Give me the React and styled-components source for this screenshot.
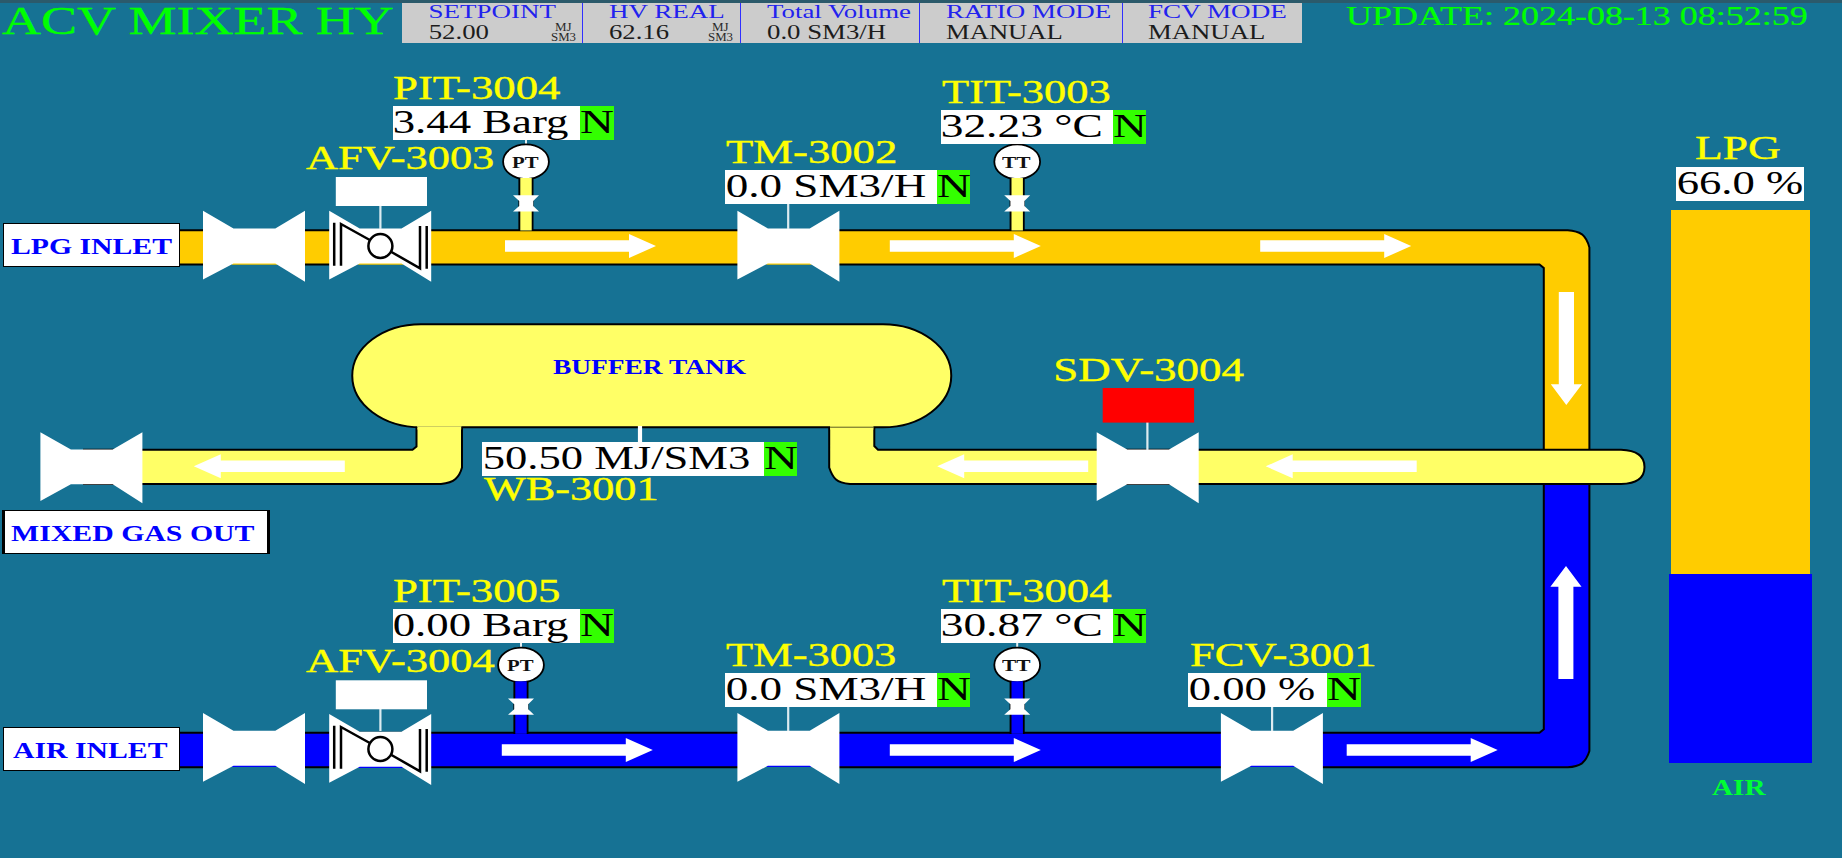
import React from "react";
import styled, { createGlobalStyle } from "styled-components";

const BG = "#167294";
const ORANGE = "#ffcc00";
const BLUE = "#0000ff";
const GAS = "#ffff66";
const YELLOW = "#ffff00";
const HEADER = 44;
const FONT = '"Liberation Serif", "Times New Roman", serif';

const GlobalStyle = createGlobalStyle`
  html, body { margin: 0; padding: 0; background: ${BG}; overflow: hidden; }
  * { box-sizing: border-box; }
`;

const Page = styled.div`
  width: 1842px;
  height: 858px;
  display: flex;
  flex-direction: column;
  background: ${BG};
  font-family: ${FONT};
  overflow: hidden;
`;

/* ---------- stretched text ---------- */

const Slot = styled.span`
  display: block;
  flex: none;
  width: ${(p) => p.$w}px;
  height: ${(p) => p.$line}px;
  line-height: ${(p) => p.$line}px;
  font-size: ${(p) => p.$size}px;
  font-weight: ${(p) => (p.$bold ? 700 : 400)};
  color: ${(p) => p.$color || "inherit"};
  -webkit-text-stroke: ${(p) => p.$heavy || 0}px currentColor;
  white-space: pre;
`;

const Glyphs = styled.span`
  display: inline-block;
  transform-origin: 0 50%;
`;

let ctx;
function stretch(text, size, bold, w) {
  ctx = ctx || document.createElement("canvas").getContext("2d");
  ctx.font = `${bold ? "bold " : ""}${size}px ${FONT}`;
  const m = ctx.measureText(text);
  const k = w / (m.actualBoundingBoxLeft + m.actualBoundingBoxRight);
  return `translateX(${m.actualBoundingBoxLeft * k}px) scaleX(${k})`;
}

function Fit({ children, w, size = 34, line = size, bold, heavy, color }) {
  return (
    <Slot $w={w} $size={size} $line={line} $bold={bold} $heavy={heavy} $color={color}>
      <Glyphs style={{ transform: stretch(children, size, bold, w) }}>{children}</Glyphs>
    </Slot>
  );
}

/* ---------- header ---------- */

const Header = styled.header`
  height: ${HEADER}px;
  flex: none;
  display: flex;
  align-items: flex-start;
  border-top: 3px solid #2b5a6b;
`;

const TitleBox = styled.h1`
  width: 401.5px;
  margin: 0;
  padding: 0 0 0 1.5px;
`;

const StatusPanel = styled.div`
  display: flex;
  height: 40px;
  background: #cccccc;
`;

const Cell = styled.div`
  width: ${(p) => p.$w}px;
  padding: 0 6.5px 0 ${(p) => p.$pad}px;
  border-right: ${(p) => (p.$last ? "0" : "1px solid #2f2fff")};
`;

const ValueRow = styled.div`
  display: flex;
  justify-content: space-between;
`;

const Unit = styled.div`
  display: flex;
  flex-direction: column;
  align-items: center;
  padding-top: 2px;
`;

const Clock = styled.div`
  padding: 0 0 0 44.5px;
`;

const STATUS = [
  { w: 181.5, pad: 28, label: "SETPOINT", lw: 126, value: "52.00", vw: 59, unit: true },
  { w: 157.5, pad: 25.7, label: "HV REAL", lw: 115, value: "62.16", vw: 60, unit: true },
  { w: 179.5, pad: 26, label: "Total Volume", lw: 143.5, value: "0.0 SM3/H", vw: 118.5 },
  { w: 202.5, pad: 26.4, label: "RATIO MODE", lw: 164, value: "MANUAL", vw: 116.5 },
  { w: 179, pad: 25.5, label: "FCV MODE", lw: 138, value: "MANUAL", vw: 117, last: true },
];

function TopBar() {
  return (
    <Header>
      <TitleBox>
        <Fit w={392} size={41} line={35} heavy={0.3} color="#00ff00">ACV MIXER HY</Fit>
      </TitleBox>
      <StatusPanel>
        {STATUS.map((s) => (
          <Cell key={s.label} $w={s.w} $pad={s.pad} $last={s.last}>
            <Fit w={s.lw} size={19.5} line={17} color="#2222ee">{s.label}</Fit>
            <ValueRow>
              <Fit w={s.vw} size={20} line={25} color="#1c1c1c">{s.value}</Fit>
              {s.unit && (
                <Unit>
                  <Fit w={17} size={12} line={10} color="#2a2a2a">MJ</Fit>
                  <Fit w={25} size={12} line={10} color="#2a2a2a">SM3</Fit>
                </Unit>
              )}
            </ValueRow>
          </Cell>
        ))}
      </StatusPanel>
      <Clock>
        <Fit w={460.5} size={28} line={25} heavy={0.2} color="#00ff00">UPDATE: 2024-08-13 08:52:59</Fit>
      </Clock>
    </Header>
  );
}

/* ---------- diagram ---------- */

const Body = styled.main`
  flex: 1;
  display: flex;
`;

const Diagram = styled.section`
  position: relative;
  width: 1660px;
  flex: none;
`;

const Piping = styled.svg`
  display: block;
`;

const Placed = styled.div`
  position: absolute;
  left: ${(p) => p.$x}px;
  top: ${(p) => p.$y - HEADER}px;
`;

const Readout = styled.div`
  display: flex;
  height: 34px;
  width: ${(p) => p.$w}px;
  background: #ffffff;
  color: #000000;
  padding-left: ${(p) => p.$pad || 1.5}px;
  justify-content: space-between;
`;

const State = styled.div`
  width: 33.2px;
  height: 34px;
  background: #33ff00;
`;

const Instrument = styled(Placed)`
  display: flex;
  flex-direction: ${(p) => (p.$below ? "column-reverse" : "column")};
`;

const TagName = styled.div`
  padding: 0 0 ${(p) => (p.$below ? 0 : 1)}px ${(p) => p.$indent || 0}px;
`;

const Terminal = styled(Placed)`
  display: flex;
  justify-content: center;
  align-items: center;
  width: ${(p) => p.$w}px;
  height: 44px;
  padding-right: ${(p) => p.$shift || 0}px;
  padding-top: 1px;
  background: #ffffff;
  border: solid #000000;
  border-width: 1.5px ${(p) => p.$side || 1.5}px;
`;

function Label({ x, y, w, size = 34, line = size, bold, color = YELLOW, children }) {
  return (
    <Placed $x={x} $y={y}>
      <Fit w={w} size={size} line={line} bold={bold} heavy={bold ? 0 : 0.4} color={color}>{children}</Fit>
    </Placed>
  );
}

/* An instrument: its tag name over (or under) the live value and alarm state. */
function Tag({ x, y, w, name, nw, indent, value, vw, below }) {
  return (
    <Instrument $x={x} $y={below ? y : y - 36} $below={below}>
      <TagName $indent={indent} $below={below}>
        <Fit w={nw} line={below ? 25 : 35} heavy={0.4} color={YELLOW}>{name}</Fit>
      </TagName>
      <Readout $w={w}>
        <Fit w={vw} line={31}>{value}</Fit>
        <State>
          <Fit w={33} line={31}>N</Fit>
        </State>
      </Readout>
    </Instrument>
  );
}

function Valve({ x, y, under }) {
  return (
    <g transform={`translate(${x} ${y})`}>
      {under && <rect x="25" y="52" width="52" height="4.5" fill={BG} />}
      {under && <rect x="29" y="51" width="45" height="3" fill={under} />}
      <polygon
        points={
          under
            ? "0,0 30.5,17.7 72.3,17.7 102,0 102,71 72.3,52.8 30.5,52.8 0,68.7"
            : "0,0 30.5,17.2 72.3,17.2 102,0 102,71 72.3,52 30.5,52 0,68.7"
        }
        fill="#fff"
      />
    </g>
  );
}

function Butterfly({ y }) {
  return (
    <g transform={`translate(0 ${y})`} fill="none" stroke="#000" strokeWidth="2.5">
      <path d="M334.2 222.7V265.7M341 265.7V224L369.8 240M420 226V268.3L390.6 251.5M426.7 226V268.7" />
      <ellipse cx="380.4" cy="246" rx="12" ry="12" />
    </g>
  );
}

function Arrow({ x, y, len = 151, angle = 0 }) {
  return (
    <polygon
      transform={`translate(${x} ${y}) rotate(${angle})`}
      points={`0,-5.7 ${len - 27},-5.7 ${len - 27},-12 ${len},0 ${len - 27},12 ${len - 27},5.7 0,5.7`}
      fill="#fff"
    />
  );
}

function Transmitter({ x, y, fill }) {
  return (
    <g transform={`translate(${x} ${y})`}>
      <rect x="-1" y="-23" width="2" height="6" fill="#e4f0f4" />
      <ellipse cx="0" cy="0" rx="22.9" ry="17.4" fill="#fff" stroke="#000" strokeWidth="1.8" />
      <rect x="-7.6" y="17" width="15.1" height="52" fill="#000" />
      <rect x="-5.7" y="16.3" width="11.4" height="52.5" fill={fill} />
      <polygon points="-13,33.6 13,33.6 7.2,39.3 7.2,44.3 13,49.8 -13,49.8 -6.8,44.3 -6.8,39.3" fill="#fff" />
    </g>
  );
}

function Pipes() {
  const line = { stroke: "#000", strokeWidth: 2 };
  const stem = { stroke: "#dcebf0", strokeWidth: 2.2 };
  return (
    <Piping width="1660" height="814" viewBox="0 44 1660 814">
      {/* LPG line */}
      <path
        d="M178 230.3H1567.7Q1577 231 1582 234.3Q1587 238.5 1589.4 247.5V452H1543.8V268L1539.5 264.4H178Z"
        fill={ORANGE} {...line}
      />
      {/* air line */}
      <path
        d="M178 732.8H1539.5L1543.8 729.3V482H1589.4V751Q1587 759 1582 763.3Q1577 766.6 1567.7 767.3H178Z"
        fill={BLUE} {...line}
      />
      {/* mixed gas line */}
      <path
        d="M874.3 427V446L878 449.8H1621Q1644.5 450.5 1644.5 467Q1644.5 483.5 1621 484H850Q840 483 836 479.5Q832 476 829.2 467.5V427"
        fill={GAS} {...line}
      />
      <path
        d="M416.5 427V446.5L412.5 449.8H84V484H441Q451 483 455.5 479Q460 475 462 467.5V427"
        fill={GAS} {...line}
      />
      {/* buffer tank */}
      <path
        d="M421 324.2H883A68.3 51.55 0 0 1 883 427.3H421A68.8 51.55 0 0 1 421 324.2Z"
        fill={GAS} {...line}
      />
      <rect x="417.4" y="425.5" width="43.8" height="4" fill={GAS} />
      <rect x="417.4" y="426" width="43.8" height="1" fill="#cfcf60" />
      <rect x="830.1" y="425.5" width="43.3" height="4" fill={GAS} />
      <rect x="830.1" y="426.7" width="43.3" height="1" fill="#5c5c22" />

      <Transmitter x={526} y={161.7} fill={GAS} />
      <Transmitter x={1017.2} y={161.7} fill={GAS} />
      <Transmitter x={521} y={665} fill={BLUE} />
      <Transmitter x={1017.2} y={665} fill={BLUE} />

      <Valve x={203} y={210.7} under={ORANGE} />
      <Valve x={329.2} y={210.7} under={ORANGE} />
      <Valve x={737.4} y={210.7} under={ORANGE} />
      <Valve x={203} y={713} under={BLUE} />
      <Valve x={329.2} y={714} under={BLUE} />
      <Valve x={737.4} y={713} under={BLUE} />
      <Valve x={1220.9} y={713} under={BLUE} />
      <Valve x={40.4} y={432.3} />
      <Valve x={1096.7} y={432.3} />

      <path d="M380.4 206V229M380.4 709V731M788.2 204V229M788.2 707V731M1272.1 707V731M1147.4 422V450" {...stem} />
      <path d="M640 426V443" stroke="#fff" strokeWidth="4.2" />
      <rect x="335.8" y="177" width="91.2" height="29" fill="#fff" />
      <rect x="335.8" y="680.3" width="91.2" height="29" fill="#fff" />
      <rect x="1102.7" y="388" width="91.4" height="34.6" fill="#f00" />
      <Butterfly y={0} />
      <Butterfly y={503} />

      <Arrow x={505} y={246} />
      <Arrow x={889.8} y={246} />
      <Arrow x={1260.2} y={246} />
      <Arrow x={501.8} y={750} />
      <Arrow x={889.8} y={750} />
      <Arrow x={1346.7} y={750} />
      <Arrow x={344.8} y={466.3} angle={180} />
      <Arrow x={1088.2} y={466.3} angle={180} />
      <Arrow x={1416.7} y={466.3} angle={180} />
      <polygon points="1558.8,292 1574,292 1574,384.3 1582,384.3 1566.3,405 1550.8,384.3 1558.8,384.3" fill="#fff" />
      <polygon points="1558.4,679 1573.4,679 1573.4,586.7 1581.5,586.7 1566,566 1550.4,586.7 1558.4,586.7" fill="#fff" />
    </Piping>
  );
}

const TAGS = [
  { x: 392.5, y: 106, w: 221, name: "PIT-3004", nw: 167.5, indent: 0.7, value: "3.44 Barg", vw: 174.5 },
  { x: 725.2, y: 170, w: 245, name: "TM-3002", nw: 170, indent: 1.2, value: "0.0 SM3/H", vw: 198.5 },
  { x: 940.8, y: 110, w: 205.7, name: "TIT-3003", nw: 167.5, indent: 1.6, value: "32.23 °C", vw: 158.5 },
  { x: 482.3, y: 442, w: 314.7, name: "WB-3001", nw: 172, indent: 1.8, value: "50.50 MJ/SM3", vw: 265, below: true },
  { x: 392.5, y: 609, w: 221, name: "PIT-3005", nw: 166, indent: 0.7, value: "0.00 Barg", vw: 174.5 },
  { x: 725.2, y: 673, w: 245, name: "TM-3003", nw: 169, indent: 1.2, value: "0.0 SM3/H", vw: 198.5 },
  { x: 940.8, y: 609, w: 205.7, name: "TIT-3004", nw: 169.5, indent: 1.6, value: "30.87 °C", vw: 158.5 },
  { x: 1188, y: 673, w: 172.5, name: "FCV-3001", nw: 184, indent: 1.5, value: "0.00 %", vw: 124.7 },
];

const BADGES = [
  { x: 512, y: 154, w: 27.3, text: "PT" },
  { x: 1002.2, y: 154, w: 29.3, text: "TT" },
  { x: 507, y: 657, w: 27.3, text: "PT" },
  { x: 1002.2, y: 657, w: 29.3, text: "TT" },
];

function Process() {
  return (
    <Diagram>
      <Pipes />

      <Terminal $x={3.3} $y={223.3} $w={177}>
        <Fit w={161} size={24} bold color={BLUE}>LPG INLET</Fit>
      </Terminal>
      <Terminal $x={2.7} $y={727.3} $w={177} $shift={1}>
        <Fit w={154.5} size={24} bold color={BLUE}>AIR INLET</Fit>
      </Terminal>
      <Terminal $x={2} $y={510} $w={267.7} $side={3} $shift={7}>
        <Fit w={243.5} size={24} bold color={BLUE}>MIXED GAS OUT</Fit>
      </Terminal>

      <Label x={553.4} y={355.7} w={193.5} size={22} bold color={BLUE}>BUFFER TANK</Label>
      <Label x={306} y={140} w={187} line={35}>AFV-3003</Label>
      <Label x={306} y={643} w={188.7} line={35}>AFV-3004</Label>
      <Label x={1055.5} y={352} w={188} line={35}>SDV-3004</Label>

      {TAGS.map((t) => (
        <Tag key={t.name} {...t} />
      ))}
      {BADGES.map((b) => (
        <Label key={`${b.x}-${b.y}`} x={b.x} y={b.y} w={b.w} size={17} bold color="#111">{b.text}</Label>
      ))}
    </Diagram>
  );
}

/* ---------- mix ratio column ---------- */

const Ratio = styled.aside`
  width: 160.7px;
  display: flex;
  flex-direction: column;
  align-items: center;
  padding-top: 86px;
`;

const Percent = styled(Readout)`
  margin: 2px 1px 8.5px 0;
  justify-content: flex-start;
`;

const Bar = styled.div`
  width: ${(p) => p.$w}px;
  height: ${(p) => p.$h}px;
  background: ${(p) => p.$color};
`;

const AirLabel = styled.div`
  margin-top: 12.5px;
  padding-right: 3px;
`;

const LpgLabel = styled.div`
  padding-right: 5px;
`;

export default function App() {
  return (
    <Page>
      <GlobalStyle />
      <TopBar />
      <Body>
        <Process />
        <Ratio>
          <LpgLabel>
            <Fit w={85} line={35} heavy={0.4} color={YELLOW}>LPG</Fit>
          </LpgLabel>
          <Percent $w={128.6} $pad={2.5}>
            <Fit w={124.8} line={31}>66.0 %</Fit>
          </Percent>
          <Bar $w={139} $h={364.5} $color={ORANGE} />
          <Bar $w={143} $h={189} $color={BLUE} />
          <AirLabel>
            <Fit w={54} size={23} bold color="#00ff33">AIR</Fit>
          </AirLabel>
        </Ratio>
      </Body>
    </Page>
  );
}
